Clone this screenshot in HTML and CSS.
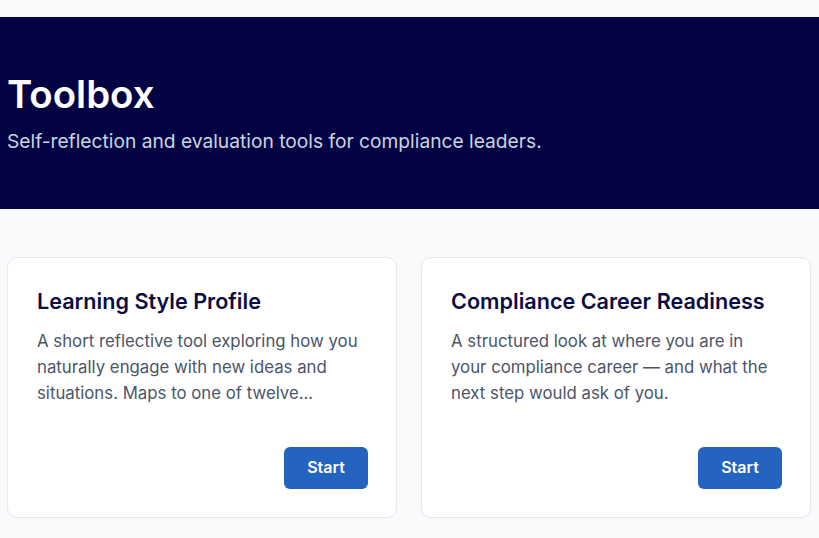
FILE: index.html
```html
<!DOCTYPE html>
<html lang="en">
<head>
<meta charset="utf-8">
<title>Toolbox</title>
<link rel="stylesheet" href="styles.css">
</head>
<body>
<header class="hero">
  <h1 class="hero-title">Toolbox</h1>
  <p class="hero-sub">Self-reflection and evaluation tools for compliance leaders.</p>
</header>
<main class="tools">
  <article class="card">
    <h2 class="card-title">Learning Style Profile</h2>
    <p class="card-text">A short reflective tool exploring how you naturally engage with new ideas and situations. Maps to one of twelve...</p>
    <div class="card-actions"><button class="btn">Start</button></div>
  </article>
  <article class="card">
    <h2 class="card-title">Compliance Career Readiness</h2>
    <p class="card-text">A structured look at where you are in your compliance career — and what the next step would ask of you.</p>
    <div class="card-actions"><button class="btn">Start</button></div>
  </article>
</main>
</body>
</html>
```
FILE: styles.css
```css
* { box-sizing: border-box; }
html, body { margin: 0; padding: 0; }
body {
  background: #f8fafc;
  font-family: Inter, "Noto Sans", sans-serif;
  padding-top: 17px;
}
.hero {
  background: #030344;
  height: 192px;
  padding: 0 7px;
  display: flex;
  flex-direction: column;
  justify-content: center;
}
.hero-title {
  margin: 0;
  color: #ffffff;
  font-size: 38.4px;
  font-weight: 600;
  line-height: 1.2;
}
.hero-sub {
  margin: 10px 0 0;
  color: #cbd5e1;
  font-size: 19.2px;
  line-height: 1.5;
}
.tools {
  display: grid;
  grid-template-columns: 1fr 1fr;
  gap: 24px;
  padding: 48px 8px 0 7px;
}
.card {
  background: #ffffff;
  border: 1px solid #e2e8f0;
  border-radius: 10px;
  padding: 28px 28px 28px 29px;
  display: flex;
  flex-direction: column;
  height: 261px;
}
.card-title {
  margin: 0;
  color: #0b0b45;
  font-size: 21.6px;
  font-weight: 600;
  line-height: 1.4;
}
.card-text {
  margin: 13px 0 0;
  color: #4a5568;
  font-size: 16.8px;
  line-height: 25.8px;
}
.card-actions {
  margin-top: auto;
  display: flex;
  justify-content: flex-end;
}
.btn {
  background: #2563c0;
  color: #ffffff;
  border: 0;
  border-radius: 6px;
  width: 84px;
  height: 42px;
  padding: 0 0 2px;
  font-family: inherit;
  font-size: 16px;
  font-weight: 600;
}
```
